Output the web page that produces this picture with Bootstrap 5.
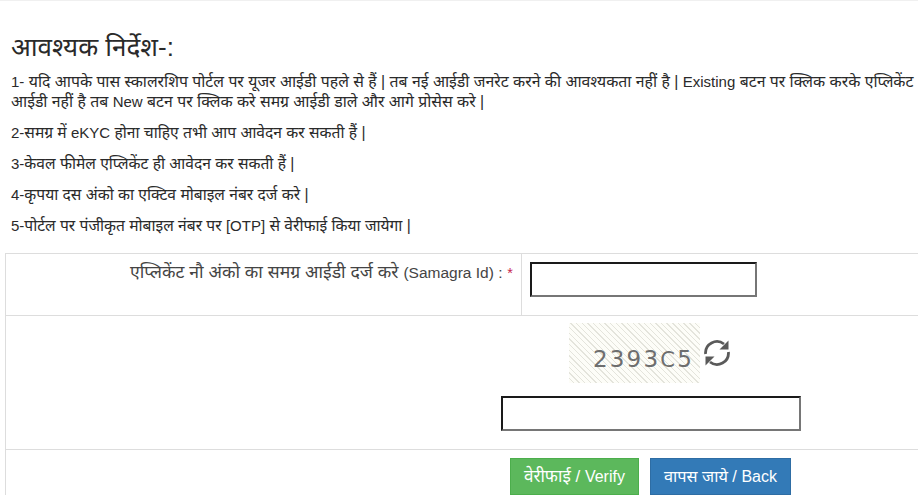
<!DOCTYPE html>
<html lang="hi">
<head>
<meta charset="utf-8">
<title>आवश्यक निर्देश</title>
<link href="https://cdn.jsdelivr.net/npm/bootstrap@5.3.0/dist/css/bootstrap.min.css" rel="stylesheet">
<style>
html, body { height: 500px; overflow: hidden; }
body { font-family: "Liberation Sans", Arial, "Noto Sans", "DejaVu Sans", sans-serif; font-size: 15.8px; line-height: 20px; color: #333; background: #fff; }
.lat { font-size: 15px; }
.top-edge { height: 1px; background: #f0f0f0; }
.notes { padding: 31px 0 0 11px; color: #2a2a2a; white-space: nowrap; }
.notes h1 { font-size: 26px; line-height: 30px; font-weight: 400; margin: 0 0 10px; color: #2a2a2a; }
.notes p { margin: 0 0 11px; }
.notes p.tight { font-size: 15.6px; }
.form-grid { margin: 17px 0 0 5px; border-left: 1px solid #ddd; }
.form-line { border-top: 1px solid #ddd; display: flex; }
.cell-label { width: 515px; height: 61px; padding: 8px 8px 0 0; text-align: right; color: #444; white-space: nowrap; font-size: 17.6px; }
.cell-label .lat { font-size: 15.5px; }
.cell-input { flex: 1; border-left: 1px solid #ddd; padding: 8px 0 0 8px; }
.req { color: #c7254e; font-size: 14.5px; }
.box-input { display: block; height: 35px; background: #fff; border-style: solid; border-width: 2px; border-color: #1a1a1a #767676 #767676 #1a1a1a; border-radius: 0; padding: 1px 2px; }
.box-a { width: 227px; }
.box-b { width: 300px; }
.captcha-row { height: 134px; padding: 7px 0 0 495px; }
.captcha-top { display: flex; align-items: center; padding-left: 68px; height: 60px; }
.captcha-img { width: 131px; height: 60px; font-family: "DejaVu Sans", sans-serif; font-size: 23px; letter-spacing: 2.2px; color: #6e6e6e; text-align: right; padding: 24px 6px 0 0; line-height: 24px; background: repeating-linear-gradient(45deg, #fdfdf8 0, #fdfdf8 3px, #e4e4dc 3px, #e4e4dc 4px); white-space: nowrap; }
.cap-c { font-size: 21px; }
.refresh { margin-left: 3px; margin-top: -1px; }
.captcha-row .box-input { margin-top: 13px; }
.action-row { padding: 8px 0 0 504px; gap: 11px; }
.action-row .btn { font-size: 16.3px; line-height: 22px; padding: 6px 0; border-radius: 0; color: #fff; height: 37px; white-space: nowrap; text-align: center; }
.action-row .lat { font-size: 16px; }
.go { background: #5cb85c; border-color: #4cae4c; width: 129px; }
.action-row .btn.go { font-size: 17px; }
.back { background: #337ab7; border-color: #2e6da4; width: 141px; }
</style>
</head>
<body>
<div class="top-edge"></div>
<div class="notes">
  <h1>आवश्यक निर्देश-:</h1>
  <p><span class="lat">1-</span> यदि आपके पास स्कालरशिप पोर्टल पर यूजर आईडी पहले से हैं | तब नई आईडी जनरेट करने की आवश्यकता नहीं है | <span class="lat">Existing</span> बटन पर क्लिक करके एप्लिकेंट<br>आईडी नहीं है तब <span class="lat">New</span> बटन पर क्लिक करे समग्र आईडी डाले और आगे प्रोसेस करे |</p>
  <p class="tight"><span class="lat">2-</span>समग्र में <span class="lat">eKYC</span> होना चाहिए तभी आप आवेदन कर सकती हैं |</p>
  <p class="tight"><span class="lat">3-</span>केवल फीमेल एप्लिकेंट ही आवेदन कर सकती हैं |</p>
  <p class="tight"><span class="lat">4-</span>कृपया दस अंको का एक्टिव मोबाइल नंबर दर्ज करे |</p>
  <p class="tight"><span class="lat">5-</span>पोर्टल पर पंजीकृत मोबाइल नंबर पर <span class="lat">[OTP]</span> से वेरीफाई किया जायेगा |</p>
</div>
<div class="form-grid">
  <div class="form-line">
    <div class="cell-label">एप्लिकेंट नौ अंको का समग्र आईडी दर्ज करे <span class="lat">(Samagra Id) :</span> <span class="req">*</span></div>
    <div class="cell-input"><input class="box-input box-a" type="text" aria-label="Samagra Id"></div>
  </div>
  <div class="form-line captcha-row d-block">
    <div class="captcha-top">
      <div class="captcha-img">2393<span class="cap-c">C</span>5</div>
      <svg class="refresh" width="28" height="28" viewBox="0 0 28 28" fill="none" stroke="#5a5a5a" stroke-width="2.8" aria-hidden="true">
        <path d="M2.6 15A11.4 11.4 0 0 1 21 5"/>
        <path d="M25.4 13A11.4 11.4 0 0 1 7 23"/>
        <path d="M25.5 1.5v9h-9z" fill="#5a5a5a" stroke="none"/>
        <path d="M2.5 26.5v-9h9z" fill="#5a5a5a" stroke="none"/>
      </svg>
    </div>
    <input class="box-input box-b" type="text" aria-label="Captcha">
  </div>
  <div class="form-line action-row">
    <button type="button" class="btn go">वेरीफाई / <span class="lat">Verify</span></button>
    <button type="button" class="btn back">वापस जाये / <span class="lat">Back</span></button>
  </div>
</div>
<script src="https://cdn.jsdelivr.net/npm/bootstrap@5.3.0/dist/js/bootstrap.bundle.min.js"></script>
</body>
</html>
